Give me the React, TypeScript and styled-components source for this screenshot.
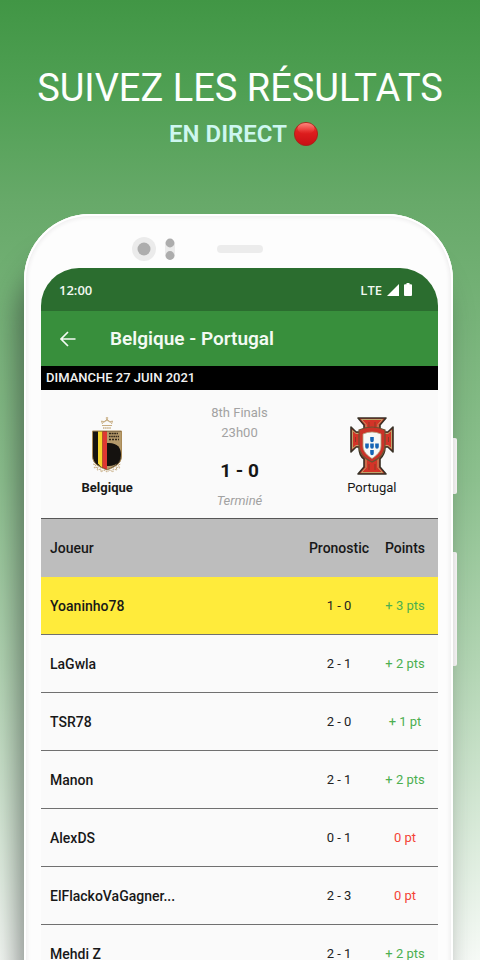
import React from "react";
import styled, { createGlobalStyle } from "styled-components";

const GlobalStyle = createGlobalStyle`
  *, *::before, *::after { box-sizing: border-box; }
  body { margin: 0; font-family: Roboto, "Liberation Sans", sans-serif; }
`;

const Page = styled.main`
  height: 100vh;
  overflow: hidden;
  background: linear-gradient(180deg, #419645 0%, #50a054 10%, #67a969 21%, #8cc08e 50%, #b4d6b5 70%, #f6faf6 100%);
`;

const Intro = styled.header`
  padding: 64px 24px 0;
  text-align: center;
`;

const Title = styled.h1`
  margin: 0;
  font-size: 38px;
  line-height: 48px;
  font-weight: 400;
  color: #fdfffd;
`;

const Subtitle = styled.p`
  display: flex;
  justify-content: center;
  align-items: center;
  gap: 6px;
  margin: 8px 0 0;
  padding-left: 8px;
  font-size: 24px;
  line-height: 28px;
  font-weight: 600;
  color: #cdf7f0;
`;

const Phone = styled.div`
  position: relative;
  margin: 66px 27px 0 24px;
  padding: 0 15px 16px 17px;
  border-radius: 66px 66px 0 0;
  background: #fdfdfd;
  box-shadow:
    inset 0 0 0 2px #fff,
    inset 0 0 4px 3px #ecebec,
    -8px 40px 28px -2px rgba(40, 46, 42, 0.56);
`;

const SideButton = styled.span<{ $top: number; $height: number }>`
  position: absolute;
  left: 100%;
  top: ${(p) => p.$top}px;
  width: 4px;
  height: ${(p) => p.$height}px;
  border-radius: 0 2px 2px 0;
  background: linear-gradient(90deg, #e2e2e2, #f4f1f2);
`;

const Bezel = styled.div`
  display: grid;
  grid-template-columns: 1fr auto 1fr;
  align-items: center;
  height: 54px;
  padding-top: 16px;
`;

const Sensors = styled.svg`
  justify-self: end;
  margin-right: 42px;
`;

const Speaker = styled.span`
  width: 46px;
  height: 8px;
  border-radius: 4px;
  background: #ececec;
`;

const Screen = styled.section`
  overflow: hidden;
  border-radius: 38px 38px 0 0;
  background: #fafafa;
  color: #181818;
`;

const StatusBar = styled.div`
  display: flex;
  align-items: center;
  justify-content: space-between;
  height: 43px;
  padding: 0 26px 0 18px;
  background: #2b6d2f;
  color: #f1f8f1;
  font-family: "Open Sans", "Noto Sans", sans-serif;
  font-size: 13px;
  font-weight: 600;
`;

const StatusIcons = styled.span`
  display: flex;
  align-items: center;
  gap: 5px;
`;

const AppBar = styled.div`
  display: flex;
  align-items: center;
  gap: 32px;
  height: 55px;
  padding-left: 17px;
  background: #388f3c;
  color: #f3faf3;
`;

const BackButton = styled.button`
  display: flex;
  padding: 0;
  border: 0;
  background: none;
  color: inherit;
  cursor: pointer;
`;

const AppTitle = styled.h2`
  margin: 0;
  font-size: 19px;
  line-height: 24px;
  font-weight: 600;
`;

const DateBar = styled.p`
  margin: 0;
  padding: 0 5px;
  background: #000;
  color: #f2f2f2;
  font-size: 13px;
  line-height: 24px;
  font-weight: 500;
`;

const Match = styled.div`
  display: grid;
  grid-template-columns: repeat(3, 1fr);
  height: 128px;
`;

const Team = styled.div<{ $winner?: boolean }>`
  display: flex;
  flex-direction: column;
  align-items: center;
  gap: 4px;
  padding-top: 26px;
  font-size: 13px;
  line-height: 16px;
  font-weight: ${(p) => (p.$winner ? 700 : 400)};
`;

const Score = styled.div`
  display: flex;
  flex-direction: column;
  align-items: center;
  padding-top: 13px;
  font-size: 13px;
  line-height: 20px;
  color: #a2a2a2;
`;

const Result = styled.strong`
  margin: 16px 0 8px;
  font-size: 19px;
  line-height: 24px;
  font-weight: 700;
  color: #161616;
`;

const Table = styled.table`
  width: 100%;
  table-layout: fixed;
  border-collapse: separate;
  border-spacing: 0;
  font-size: 13px;
  line-height: 16px;
`;

const HeadCell = styled.th<{ $first?: boolean }>`
  width: ${(p) => (p.$first ? "auto" : "66px")};
  height: 59px;
  padding: ${(p) => (p.$first ? "0 0 0 9px" : "0")};
  border-top: 1px solid #565656;
  background: #bdbdbd;
  text-align: ${(p) => (p.$first ? "left" : "center")};
  font-size: 14px;
  font-weight: 500;
`;

const Row = styled.tr<{ $highlight?: boolean }>`
  background: ${(p) => (p.$highlight ? "#ffeb3b" : "transparent")};
`;

const NameCell = styled.th`
  height: 58px;
  padding: 0 0 0 9px;
  border-bottom: 1px solid #707070;
  text-align: left;
  font-size: 14px;
  font-weight: 500;
`;

const Cell = styled.td<{ $tone?: "win" | "lose" }>`
  padding: 0;
  border-bottom: 1px solid #707070;
  text-align: center;
  white-space: nowrap;
  color: ${(p) => (p.$tone === "win" ? "#4caf50" : p.$tone === "lose" ? "#f44336" : "#222")};
`;

const players = [
  { name: "Yoaninho78", guess: "1 - 0", points: "+ 3 pts" },
  { name: "LaGwla", guess: "2 - 1", points: "+ 2 pts" },
  { name: "TSR78", guess: "2 - 0", points: "+ 1 pt" },
  { name: "Manon", guess: "2 - 1", points: "+ 2 pts" },
  { name: "AlexDS", guess: "0 - 1", points: "0 pt" },
  { name: "ElFlackoVaGagner...", guess: "2 - 3", points: "0 pt" },
  { name: "Mehdi Z", guess: "2 - 1", points: "+ 2 pts" },
];

const LiveDot = () => (
  <svg width="26" height="26" viewBox="0 0 26 26" aria-hidden="true">
    <defs>
      <linearGradient id="dot" x1="0" y1="0" x2="0" y2="1">
        <stop offset="0" stopColor="#ee4c45" />
        <stop offset="0.4" stopColor="#df1e1e" />
        <stop offset="1" stopColor="#c80f14" />
      </linearGradient>
      <linearGradient id="shine" x1="0" y1="0" x2="0" y2="1">
        <stop offset="0" stopColor="#ff9b90" stopOpacity="0.75" />
        <stop offset="1" stopColor="#ff6a60" stopOpacity="0" />
      </linearGradient>
    </defs>
    <circle cx="13" cy="13" r="11.6" fill="url(#dot)" stroke="#a31f17" strokeWidth="0.8" />
    <ellipse cx="13" cy="7.5" rx="8.5" ry="5.5" fill="url(#shine)" />
  </svg>
);

const BelgiumCrest = () => (
  <svg width="36" height="60" viewBox="0 0 36 60" aria-hidden="true">
    <g fill="none" stroke="#c7ad83" strokeWidth="1">
      <path d="M13 9.500h10M13.500 8l-1-3 3 1 2.500-3 2.500 3 3-1-1 3M18 1v2M16.800 2h2.400M14 6.500q4-4 8 0" />
      <path d="M14 12h8" strokeWidth="1.500" strokeDasharray="1.500 .6" />
      <path d="M4 48l3 1-2 3 4-1-1 3 4-1v3l3-2 3 2 3-2 3 2v-3l4 1-1-3 4 1-2-3 3-1" strokeDasharray="2 .7" />
    </g>
    <path d="M3.500 15h29v25c0 8-7 11-14.500 14C10.500 51 3.500 48 3.500 40z" fill="#17130f" stroke="#aa8a56" strokeWidth="1" />
    <path d="M9 15.500h4.500v36c-2-1-3.500-2.500-4.500-4z" fill="#f5d52f" />
    <path d="M13.500 15.500h4.500V53.500l-4.500-2z" fill="#df3732" />
    <path d="M18 15.500h14V41c-2 7-8 10-14 12.500z" fill="#b59a6b" />
    <path d="M18 27h2c8.500 0 12 5 12 11.500S28 50 20 50h-2z" fill="#15120f" />
    <g stroke="#33271a" strokeWidth="1.300">
      <path d="M20 17.500h9" strokeDasharray="2 .6" />
      <path d="M20 20.500h10" strokeDasharray="1.600 .6" />
      <path d="M20 23.500h10" strokeDasharray="2 1" />
    </g>
  </svg>
);

const PortugalCrest = () => (
  <svg width="46" height="60" viewBox="0 0 46 60" aria-hidden="true">
    <path
      d="M9 2h28l-6 7v7h8l5-5v25l-5-5h-3c0 7-3 10-5 12v8l6 7H9l6-7v-8c-3-2-5-6-5-12H7l-5 5V11l5 5h8V9z"
      fill="#d33428"
      stroke="#393126"
      strokeWidth="1.600"
      strokeLinejoin="round"
    />
    <path
      d="M12.500 3.500h21L29 8.500v9h10l3.500-3v18l-3.500-3h-4c0 7-2 10-6 13v9l4.500 5h-21l4.500-5v-9c-4-3-6-6-6-13H7l-3.500 3v-18l3.500 3h10v-9z"
      fill="none"
      stroke="#bda56b"
      strokeWidth="1"
    />
    <path d="M10 14q13-6 26 0v15c0 9-6 14-13 17-7-3-13-8-13-17z" fill="#cb3328" stroke="#6b5433" strokeWidth="1.200" />
    <path d="M14 18q9-4 18 0v12c0 6-5 10-9 12.500C19 40 14 36 14 30z" fill="#f8f8f6" stroke="#b3a27c" strokeWidth=".8" />
    <g fill="#1765b5">
      {[[23, 23.5], [18, 30], [23, 30], [28, 30], [23, 36.5]].map(([x, y]) => (
        <path key={`${x}-${y}`} d={`M${x - 1.8} ${y - 2.5}h3.600v3.200q0 1.800-1.800 2q-1.800-.2-1.800-2z`} />
      ))}
    </g>
    <path d="M20 6v6M26 6v6M20 48v6M26 48v6M6.500 21v5M39.500 21v5" stroke="#8d3a25" strokeWidth="1" />
  </svg>
);

export default function App() {
  return (
    <Page>
      <GlobalStyle />
      <Intro>
        <Title>SUIVEZ LES RÉSULTATS</Title>
        <Subtitle>
          EN DIRECT
          <LiveDot />
        </Subtitle>
      </Intro>
      <Phone>
        <SideButton $top={224} $height={56} />
        <SideButton $top={338} $height={114} />
        <Bezel>
          <Sensors width="44" height="26" viewBox="0 0 44 26" aria-hidden="true">
            <circle cx="13" cy="13" r="12" fill="#ebebeb" />
            <circle cx="13" cy="13" r="6.500" fill="#adadad" />
            <rect x="34" y="3" width="10" height="21" rx="5" fill="#ebebeb" />
            <circle cx="39" cy="7" r="4.400" fill="#adadad" />
            <circle cx="39" cy="19.500" r="4.400" fill="#adadad" />
          </Sensors>
          <Speaker />
        </Bezel>
        <Screen>
          <StatusBar>
            <span>12:00</span>
            <StatusIcons>
              LTE
              <svg width="12" height="12" viewBox="0 0 12 12" aria-hidden="true">
                <path d="M12 0v12H0z" fill="#fff" />
              </svg>
              <svg width="8" height="13" viewBox="0 0 8 13" aria-hidden="true">
                <path d="M2.500 0h3v1.200H7q1 0 1 1V12q0 1-1 1H1q-1 0-1-1V2.200q0-1 1-1h1.500z" fill="#fff" />
              </svg>
            </StatusIcons>
          </StatusBar>
          <AppBar>
            <BackButton type="button" aria-label="Retour">
              <svg width="20" height="20" viewBox="0 0 20 20" fill="none" stroke="currentColor" strokeWidth="1.700" aria-hidden="true">
                <path d="M17.500 10H3.500M10 3L3 10l7 7" />
              </svg>
            </BackButton>
            <AppTitle>Belgique - Portugal</AppTitle>
          </AppBar>
          <DateBar>DIMANCHE 27 JUIN 2021</DateBar>
          <Match>
            <Team $winner>
              <BelgiumCrest />
              Belgique
            </Team>
            <Score>
              <span>8th Finals</span>
              <span>23h00</span>
              <Result>1 - 0</Result>
              <em>Terminé</em>
            </Score>
            <Team>
              <PortugalCrest />
              Portugal
            </Team>
          </Match>
          <Table>
            <thead>
              <tr>
                <HeadCell scope="col" $first>Joueur</HeadCell>
                <HeadCell scope="col">Pronostic</HeadCell>
                <HeadCell scope="col">Points</HeadCell>
              </tr>
            </thead>
            <tbody>
              {players.map((p, i) => (
                <Row key={p.name} $highlight={i === 0}>
                  <NameCell scope="row">{p.name}</NameCell>
                  <Cell>{p.guess}</Cell>
                  <Cell $tone={p.points.startsWith("+") ? "win" : "lose"}>{p.points}</Cell>
                </Row>
              ))}
            </tbody>
          </Table>
        </Screen>
      </Phone>
    </Page>
  );
}
